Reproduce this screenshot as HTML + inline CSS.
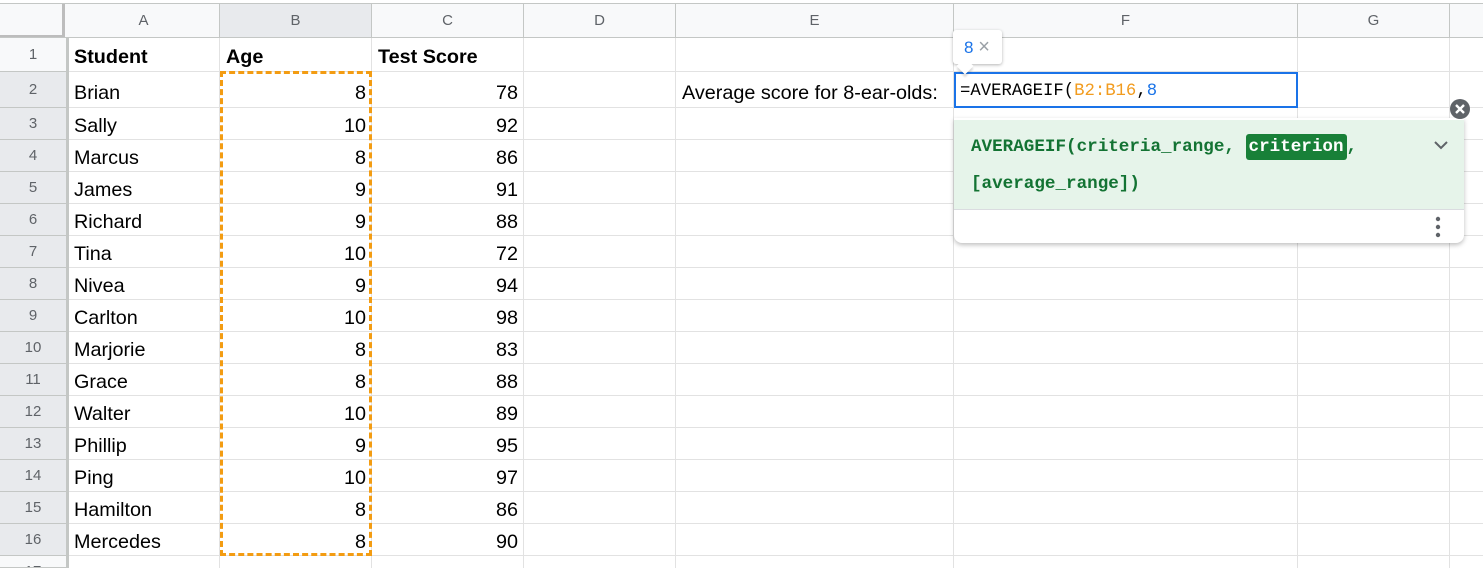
<!DOCTYPE html>
<html><head><meta charset="utf-8"><style>
*{margin:0;padding:0;box-sizing:border-box}
html,body{width:1483px;height:568px;overflow:hidden}
body{background:#fff;position:relative;font-family:"Liberation Sans",Arial,sans-serif;}
.a{position:absolute}
.h{position:absolute;top:4px;height:34px;line-height:34px;text-align:center;color:#5f6368;font-size:15px;background:#f8f9fa;border-right:1px solid #c4c7c5}
.rn{position:absolute;left:0;width:66px;text-align:center;color:#5f6368;font-size:15px;background:#e8eaed;border-bottom:1px solid #c4c7c5}
.vl{position:absolute;top:38px;height:530px;width:1px;background:#e2e2e2}
.hl{position:absolute;left:68px;right:0;height:1px;background:#e2e2e2}
.c{position:absolute;font-size:19.8px;color:#000;white-space:nowrap;padding-top:2px}
.l{padding-left:6px}
.r{text-align:right;padding-right:6px}
.mono{font-family:"Liberation Mono","DejaVu Sans Mono",monospace}
</style></head><body>
<div class="a" style="left:0;top:0;width:1483px;height:4px;background:#fff;border-bottom:1px solid #c4c7c5"></div>
<div class="a" style="left:0;top:4px;width:1483px;height:34px;background:#f8f9fa;border-bottom:1px solid #c4c7c5"></div>
<div class="a" style="left:0;top:4px;width:65px;height:34px;background:#f8f9fa;border-right:3px solid #bdbdbd;border-bottom:3px solid #bdbdbd"></div>
<div class="h" style="left:68px;width:152px">A</div>
<div class="h" style="left:220px;width:152px;background:#e8eaed">B</div>
<div class="h" style="left:372px;width:152px">C</div>
<div class="h" style="left:524px;width:152px">D</div>
<div class="h" style="left:676px;width:278px">E</div>
<div class="h" style="left:954px;width:344px">F</div>
<div class="h" style="left:1298px;width:152px">G</div>
<div class="h" style="left:1450px;width:40px"></div>
<div class="a" style="left:0;top:37px;width:1483px;height:1px;background:#c4c7c5"></div>
<div class="vl" style="left:219px"></div><div class="vl" style="left:371px"></div><div class="vl" style="left:523px"></div><div class="vl" style="left:675px"></div><div class="vl" style="left:953px"></div><div class="vl" style="left:1297px"></div><div class="vl" style="left:1449px"></div>
<div class="hl" style="top:71px"></div><div class="hl" style="top:107px"></div><div class="hl" style="top:139px"></div><div class="hl" style="top:171px"></div><div class="hl" style="top:203px"></div><div class="hl" style="top:235px"></div><div class="hl" style="top:267px"></div><div class="hl" style="top:299px"></div><div class="hl" style="top:331px"></div><div class="hl" style="top:363px"></div><div class="hl" style="top:395px"></div><div class="hl" style="top:427px"></div><div class="hl" style="top:459px"></div><div class="hl" style="top:491px"></div><div class="hl" style="top:523px"></div><div class="hl" style="top:555px"></div>
<div class="a" style="left:66px;top:38px;width:3px;height:530px;background:#c4c7c5"></div>
<div class="rn" style="top:38px;height:34px;line-height:33px;background:#f8f9fa">1</div>
<div class="rn" style="top:72px;height:36px;line-height:35px">2</div>
<div class="rn" style="top:108px;height:32px;line-height:31px">3</div>
<div class="rn" style="top:140px;height:32px;line-height:31px">4</div>
<div class="rn" style="top:172px;height:32px;line-height:31px">5</div>
<div class="rn" style="top:204px;height:32px;line-height:31px">6</div>
<div class="rn" style="top:236px;height:32px;line-height:31px">7</div>
<div class="rn" style="top:268px;height:32px;line-height:31px">8</div>
<div class="rn" style="top:300px;height:32px;line-height:31px">9</div>
<div class="rn" style="top:332px;height:32px;line-height:31px">10</div>
<div class="rn" style="top:364px;height:32px;line-height:31px">11</div>
<div class="rn" style="top:396px;height:32px;line-height:31px">12</div>
<div class="rn" style="top:428px;height:32px;line-height:31px">13</div>
<div class="rn" style="top:460px;height:32px;line-height:31px">14</div>
<div class="rn" style="top:492px;height:32px;line-height:31px">15</div>
<div class="rn" style="top:524px;height:32px;line-height:31px">16</div>
<div class="rn" style="top:556px;height:12px;line-height:31px;background:#f8f9fa;overflow:hidden">17</div>
<div class="c l" style="left:68px;top:38px;width:152px;line-height:34px;font-weight:bold">Student</div>
<div class="c l" style="left:220px;top:38px;width:152px;line-height:34px;font-weight:bold">Age</div>
<div class="c l" style="left:372px;top:38px;width:152px;line-height:34px;font-weight:bold">Test Score</div>
<div class="c l" style="left:68px;top:73px;width:152px;line-height:36px">Brian</div>
<div class="c r" style="left:220px;top:73px;width:152px;line-height:36px">8</div>
<div class="c r" style="left:372px;top:73px;width:152px;line-height:36px">78</div>
<div class="c l" style="left:676px;top:73px;width:278px;line-height:36px">Average score for 8-ear-olds:</div>
<div class="c l" style="left:68px;top:108px;line-height:32px">Sally</div><div class="c r" style="left:220px;top:108px;width:152px;line-height:32px">10</div><div class="c r" style="left:372px;top:108px;width:152px;line-height:32px">92</div>
<div class="c l" style="left:68px;top:140px;line-height:32px">Marcus</div><div class="c r" style="left:220px;top:140px;width:152px;line-height:32px">8</div><div class="c r" style="left:372px;top:140px;width:152px;line-height:32px">86</div>
<div class="c l" style="left:68px;top:172px;line-height:32px">James</div><div class="c r" style="left:220px;top:172px;width:152px;line-height:32px">9</div><div class="c r" style="left:372px;top:172px;width:152px;line-height:32px">91</div>
<div class="c l" style="left:68px;top:204px;line-height:32px">Richard</div><div class="c r" style="left:220px;top:204px;width:152px;line-height:32px">9</div><div class="c r" style="left:372px;top:204px;width:152px;line-height:32px">88</div>
<div class="c l" style="left:68px;top:236px;line-height:32px">Tina</div><div class="c r" style="left:220px;top:236px;width:152px;line-height:32px">10</div><div class="c r" style="left:372px;top:236px;width:152px;line-height:32px">72</div>
<div class="c l" style="left:68px;top:268px;line-height:32px">Nivea</div><div class="c r" style="left:220px;top:268px;width:152px;line-height:32px">9</div><div class="c r" style="left:372px;top:268px;width:152px;line-height:32px">94</div>
<div class="c l" style="left:68px;top:300px;line-height:32px">Carlton</div><div class="c r" style="left:220px;top:300px;width:152px;line-height:32px">10</div><div class="c r" style="left:372px;top:300px;width:152px;line-height:32px">98</div>
<div class="c l" style="left:68px;top:332px;line-height:32px">Marjorie</div><div class="c r" style="left:220px;top:332px;width:152px;line-height:32px">8</div><div class="c r" style="left:372px;top:332px;width:152px;line-height:32px">83</div>
<div class="c l" style="left:68px;top:364px;line-height:32px">Grace</div><div class="c r" style="left:220px;top:364px;width:152px;line-height:32px">8</div><div class="c r" style="left:372px;top:364px;width:152px;line-height:32px">88</div>
<div class="c l" style="left:68px;top:396px;line-height:32px">Walter</div><div class="c r" style="left:220px;top:396px;width:152px;line-height:32px">10</div><div class="c r" style="left:372px;top:396px;width:152px;line-height:32px">89</div>
<div class="c l" style="left:68px;top:428px;line-height:32px">Phillip</div><div class="c r" style="left:220px;top:428px;width:152px;line-height:32px">9</div><div class="c r" style="left:372px;top:428px;width:152px;line-height:32px">95</div>
<div class="c l" style="left:68px;top:460px;line-height:32px">Ping</div><div class="c r" style="left:220px;top:460px;width:152px;line-height:32px">10</div><div class="c r" style="left:372px;top:460px;width:152px;line-height:32px">97</div>
<div class="c l" style="left:68px;top:492px;line-height:32px">Hamilton</div><div class="c r" style="left:220px;top:492px;width:152px;line-height:32px">8</div><div class="c r" style="left:372px;top:492px;width:152px;line-height:32px">86</div>
<div class="c l" style="left:68px;top:524px;line-height:32px">Mercedes</div><div class="c r" style="left:220px;top:524px;width:152px;line-height:32px">8</div><div class="c r" style="left:372px;top:524px;width:152px;line-height:32px">90</div>
<div class="a" style="left:220px;top:71px;width:152px;height:485px;border:3px dashed #f39c12"></div>
<div class="a mono" style="left:954px;top:72px;width:344px;height:36px;border:2px solid #1a73e8;background:#fff;font-size:17.3px;line-height:36px;padding-left:4px;color:#000;white-space:nowrap">=AVERAGEIF(<span style="color:#f29c1f">B2:B16</span>,<span style="color:#1a73e8">8</span></div>
<div class="a" style="left:953px;top:30px;width:49px;height:34px;background:#fff;border-radius:3px;box-shadow:0 1px 3px rgba(0,0,0,.3)"></div>
<div class="a" style="left:959px;top:60px;width:12px;height:12px;background:#fff;transform:rotate(45deg);box-shadow:2px 2px 2px rgba(0,0,0,.15)"></div>
<div class="a" style="left:953px;top:30px;width:49px;height:34px;line-height:34px;font-size:17px;padding-left:11px;color:#1a73e8">8 <span style="color:#9aa0a6;font-size:20px">×</span></div>
<div class="a" style="left:954px;top:118px;width:510px;height:125px;background:#fff;border-radius:0 0 8px 8px;box-shadow:0 2px 5px rgba(0,0,0,.25)"></div>
<div class="a" style="left:954px;top:120px;width:510px;height:90px;background:#e6f4ea;border-bottom:1px solid #dadce0"></div>
<div class="a mono" style="left:971px;top:129px;font-size:17.6px;line-height:37px;color:#137333;font-weight:bold;white-space:nowrap">AVERAGEIF(criteria_range, <span style="background:#188038;color:#fff;border-radius:3px;padding:3px 3px">criterion</span>,<br>[average_range])</div>
<svg class="a" style="left:1432px;top:138px" width="18" height="14" viewBox="0 0 18 14"><path d="M3 4 L9 10 L15 4" fill="none" stroke="#5f6368" stroke-width="2"/></svg>
<svg class="a" style="left:1432px;top:216px" width="12" height="22" viewBox="0 0 12 22"><circle cx="6" cy="3" r="2.2" fill="#5f6368"/><circle cx="6" cy="11" r="2.2" fill="#5f6368"/><circle cx="6" cy="19" r="2.2" fill="#5f6368"/></svg>
<svg class="a" style="left:1449px;top:98px" width="22" height="22" viewBox="0 0 22 22"><circle cx="11" cy="11" r="10" fill="#5f6368"/><path d="M7 7 L15 15 M15 7 L7 15" stroke="#fff" stroke-width="2.4"/></svg>
</body></html>
